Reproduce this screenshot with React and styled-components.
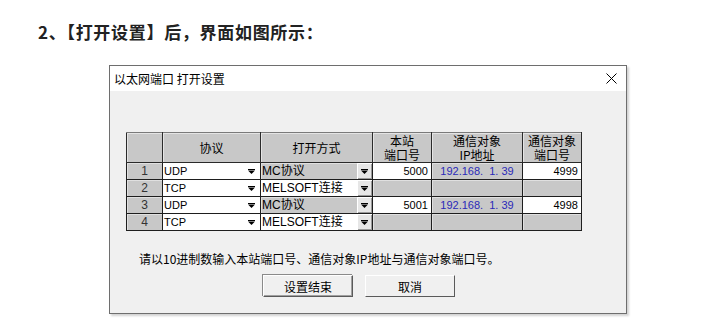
import React from 'react';
import styled, { createGlobalStyle } from 'styled-components';

const GlobalStyle = createGlobalStyle`
  body {
    margin: 0;
    background: #ffffff;
    font-family: "Noto Sans CJK SC", sans-serif;
  }
`;

const Page = styled.div`
  width: 701px;
  height: 336px;
  overflow: hidden;
  padding-top: 20px;
  box-sizing: border-box;
`;

const Heading = styled.h2`
  margin: 0 0 21px 38px;
  font-size: 17px;
  line-height: 24px;
  font-weight: 700;
  color: #222222;
  letter-spacing: 0.7px;
`;

// Dialog window
const Dialog = styled.div`
  margin-left: 109px;
  width: 518px;
  height: 249px;
  box-sizing: border-box;
  border: 1px solid #6e6e6e;
  box-shadow: 2px 2px 2px rgba(0, 0, 0, 0.18);
  display: flex;
  flex-direction: column;
  background: #f0f0f0;
`;

const TitleBar = styled.div`
  height: 25px;
  flex-shrink: 0;
  background: #ffffff;
  display: flex;
  align-items: center;
  justify-content: space-between;
  padding: 0 9px 0 4px;
  font-size: 12px;
  color: #000000;
`;

const CloseIcon = styled.svg`
  width: 11px;
  height: 11px;
  display: block;
`;

const Body = styled.div`
  flex: 1;
  padding: 41px 0 0 16px;
  display: flex;
  flex-direction: column;
`;

// Grid table
const Grid = styled.table`
  border-collapse: collapse;
  table-layout: fixed;
  width: 455px;
  border: 1px solid #7a7a7a;
  font-size: 12px;
`;

const HeadCell = styled.th`
  height: 29px;
  padding: 0;
  background: #c8c8c8;
  border: 1px solid #2a2a2a;
  border-top-color: #7a7a7a;
  box-shadow: inset 1px 1px 0 #e4e4e4;
  font-weight: 400;
  font-size: 12px;
  line-height: 14px;
  color: #000000;
  text-align: center;
  vertical-align: middle;
`;

const Cell = styled.td`
  height: 16px;
  padding: 0;
  background: ${({ $white }) => ($white ? '#ffffff' : '#c8c8c8')};
  border: 1px solid #1e1e1e;
  box-shadow: ${({ $white }) => ($white ? 'none' : 'inset 1px 1px 0 #e0e0e0')};
  font-family: "Liberation Sans", "Noto Sans CJK SC", sans-serif;
  font-size: 11px;
  line-height: 16px;
  color: ${({ $blue }) => ($blue ? '#2a2ab8' : '#000000')};
  text-align: ${({ $align }) => $align || 'left'};
  white-space: pre;
  overflow: hidden;
`;

const NumCell = styled(Cell)`
  text-align: center;
  font-size: 12px;
  color: #333333;
`;

const Combo = styled.div`
  display: flex;
  align-items: center;
  height: 16px;
`;

const ComboText = styled.span`
  flex: 1;
  padding-left: 1px;
  font-size: ${({ $cjk }) => ($cjk ? '12px' : '11px')};
  overflow: hidden;
`;

const ComboButton = styled.span`
  width: 15px;
  height: 16px;
  display: flex;
  align-items: center;
  justify-content: center;
  background: ${({ $raised }) => ($raised ? '#e6e6e6' : 'transparent')};
  box-shadow: ${({ $raised }) =>
    $raised ? 'inset 1px 1px 0 #ffffff, inset -1px -1px 0 #9a9a9a' : 'none'};
  margin-right: ${({ $raised }) => ($raised ? '0' : '1px')};
`;

const Arrow = () => (
  <svg width="7" height="5" viewBox="0 0 7 5">
    <rect x="0" y="0" width="7" height="1" fill="#000" />
    <path d="M0 1.5h7L3.5 5z" fill="#000" />
  </svg>
);

const Note = styled.p`
  margin: 20px 0 0 13px;
  font-size: 12px;
  line-height: 16px;
  color: #000000;
`;

const ButtonRow = styled.div`
  display: flex;
  gap: 12px;
  margin: 8px 0 0 137px;
`;

const Button = styled.button`
  width: 90px;
  height: 22px;
  padding: 0;
  background: #f0f0f0;
  border: 1px solid;
  border-color: #ffffff #5a5a5a #5a5a5a #ffffff;
  box-shadow: inset -1px -1px 0 #a0a0a0, ${({ $default }) => ($default ? '-1px -1px 0 #8a8a8a' : 'none')};
  font-family: "Noto Sans CJK SC", sans-serif;
  font-size: 12px;
  color: #000000;
`;

const rows = [
  { n: 1, proto: 'UDP', open: 'MC协议', local: '5000', ip: '192.168.  1. 39', remote: '4999' },
  { n: 2, proto: 'TCP', open: 'MELSOFT连接' },
  { n: 3, proto: 'UDP', open: 'MC协议', local: '5001', ip: '192.168.  1. 39', remote: '4998' },
  { n: 4, proto: 'TCP', open: 'MELSOFT连接' },
];

const App = () => (
  <Page>
    <GlobalStyle />
    <Heading>2、【打开设置】后，界面如图所示：</Heading>
    <Dialog>
      <TitleBar>
        <span>以太网端口 打开设置</span>
        <CloseIcon viewBox="0 0 11 11">
          <path d="M0.5 0.5L10.5 10.5M10.5 0.5L0.5 10.5" stroke="#000" strokeWidth="1" />
        </CloseIcon>
      </TitleBar>
      <Body>
        <Grid>
          <colgroup>
            <col style={{ width: 36 }} />
            <col style={{ width: 98 }} />
            <col style={{ width: 112 }} />
            <col style={{ width: 59 }} />
            <col style={{ width: 91 }} />
            <col style={{ width: 59 }} />
          </colgroup>
          <thead>
            <tr>
              <HeadCell />
              <HeadCell>协议</HeadCell>
              <HeadCell>打开方式</HeadCell>
              <HeadCell>本站<br />端口号</HeadCell>
              <HeadCell>通信对象<br />IP地址</HeadCell>
              <HeadCell>通信对象<br />端口号</HeadCell>
            </tr>
          </thead>
          <tbody>
            {rows.map((r) => {
              const active = Boolean(r.local);
              return (
                <tr key={r.n}>
                  <NumCell>{r.n}</NumCell>
                  <Cell $white>
                    <Combo>
                      <ComboText>{r.proto}</ComboText>
                      <ComboButton><Arrow /></ComboButton>
                    </Combo>
                  </Cell>
                  <Cell $white={!active}>
                    <Combo>
                      <ComboText $cjk>{r.open}</ComboText>
                      <ComboButton $raised><Arrow /></ComboButton>
                    </Combo>
                  </Cell>
                  <Cell $white={active} $align="right">{r.local ? `${r.local} ` : ''}</Cell>
                  <Cell $blue $align="center">{r.ip || ''}</Cell>
                  <Cell $white={active} $align="right">{r.remote ? `${r.remote} ` : ''}</Cell>
                </tr>
              );
            })}
          </tbody>
        </Grid>
        <Note>请以10进制数输入本站端口号、通信对象IP地址与通信对象端口号。</Note>
        <ButtonRow>
          <Button $default>设置结束</Button>
          <Button>取消</Button>
        </ButtonRow>
      </Body>
    </Dialog>
  </Page>
);

export default App;
